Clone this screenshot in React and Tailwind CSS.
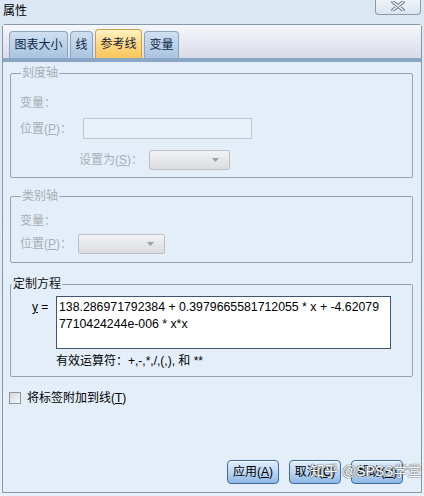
import React from 'react';

const font = { fontFamily: '"Liberation Sans", "Noto Sans CJK SC", sans-serif' };

// disabled grey dropdown
const Combo = ({ width }) => (
    <div
        className={`${width} h-[20px] flex items-center justify-end pr-[10px] border border-[#bcc0c4] rounded-[2px] bg-gradient-to-b from-[#f1f2f3] to-[#dadcde]`}
    >
        <svg width="7" height="4" viewBox="0 0 7 4">
            <path d="M0 0 H7 L3.5 4 Z" fill="#9ca0a5" />
        </svg>
    </div>
);

const Tab = ({ label, width, active }) => (
    <div
        className={
            active
                ? `${width} h-[29px] flex items-center justify-center rounded-t-[4px] border border-b-0 border-[#c8a04e] bg-gradient-to-b from-[#fff2c2] via-[#ffd981] to-[#f7c55d] text-[12px] text-[#1a2436]`
                : `${width} h-[27px] flex items-center justify-center rounded-t-[4px] border border-b-0 border-[#8aa4bf] bg-gradient-to-b from-[#cfe0f1] to-[#a9c4df] text-[12px] text-[#0f2748]`
        }
    >
        {label}
    </div>
);

const Button = ({ children }) => (
    <button className="w-[52px] h-[24px] rounded-[4px] border border-[#3f6b9c] bg-gradient-to-b from-[#e1eefb] via-[#bcd7f3] to-[#8fb8e5] text-[12px] text-black flex items-center justify-center shadow-[inset_0_1px_0_rgba(255,255,255,0.8)]">
        {children}
    </button>
);

export default function App() {
    return (
        <div className="relative w-[424px] h-[496px] overflow-hidden bg-gradient-to-b from-[#dbe7f3] to-[#e7eff7]" style={font}>
            {/* title bar */}
            <div className="h-[24px] flex items-start justify-between">
                <span className="pl-[3px] pt-[3px] text-[12px] leading-[16px] text-black">属性</span>
                <div className="mr-[3px] w-[46px] h-[15px] rounded-b-[4px] border border-t-0 border-[#8c9aa8] bg-gradient-to-b from-[#eef3f8] to-[#dbe4ee] flex items-start justify-center">
                    <svg width="14" height="10" viewBox="0 0 14 10" className="mt-[1px]">
                        <path d="M2 1 L12 9 M12 1 L2 9" stroke="#5c6f83" strokeWidth="3.4" strokeLinecap="round" />
                        <path d="M2 1 L12 9 M12 1 L2 9" stroke="#ffffff" strokeWidth="1.6" strokeLinecap="round" />
                    </svg>
                </div>
            </div>

            {/* dialog frame */}
            <div className="ml-[2px] w-[420px] h-[469px] border border-[#8797a8] rounded-t-[3px] flex flex-col">
                {/* tab header */}
                <div className="h-[33px] flex items-end gap-[2px] pl-[6px] bg-gradient-to-b from-[#f6f7fa] to-[#d9dbe8]">
                    <Tab label="图表大小" width="w-[59px]" />
                    <Tab label="线" width="w-[23px]" />
                    <Tab label="参考线" width="w-[47px]" active />
                    <Tab label="变量" width="w-[35px]" />
                </div>
                <div className="h-[4px] bg-[#8aa8c5]" />

                {/* content */}
                <div className="flex-1 flex flex-col bg-[#e3eef9] px-[7px] text-[12px]">
                    {/* 刻度轴 */}
                    <fieldset className="mt-[4px] w-[403px] h-[112px] border border-[#97a3ad] rounded-[2px] px-[9px]">
                        <legend className="ml-[1px] px-[1px] leading-[14px] text-[#a7aeb5]">刻度轴</legend>
                        <div className="pt-[15px] flex flex-col text-[#a7aeb5]">
                            <div className="h-[16px] leading-[16px]">变量：</div>
                            <div className="mt-[7px] h-[21px] flex items-center">
                                <span className="w-[63px]">位置(<span className="underline">P</span>)：</span>
                                <div className="w-[169px] h-[21px] border border-[#bcc6cf] bg-[#e9f1f8]" />
                            </div>
                            <div className="mt-[11px] h-[20px] flex items-center pl-[59px]">
                                <span className="w-[70px]">设置为(<span className="underline">S</span>)：</span>
                                <Combo width="w-[81px]" />
                            </div>
                        </div>
                    </fieldset>

                    {/* 类别轴 */}
                    <fieldset className="mt-[11px] w-[403px] h-[74px] border border-[#97a3ad] rounded-[2px] px-[9px]">
                        <legend className="ml-[1px] px-[1px] leading-[14px] text-[#a7aeb5]">类别轴</legend>
                        <div className="pt-[10px] flex flex-col text-[#a7aeb5]">
                            <div className="h-[16px] leading-[16px]">变量：</div>
                            <div className="mt-[5px] h-[20px] flex items-center">
                                <span className="w-[58px]">位置(<span className="underline">P</span>)：</span>
                                <Combo width="w-[87px]" />
                            </div>
                        </div>
                    </fieldset>

                    {/* 定制方程 */}
                    <fieldset className="mt-[14px] w-[403px] h-[100px] border border-[#97a3ad] rounded-[2px]">
                        <legend className="ml-[1px] px-[1px] leading-[14px] text-[#111]">定制方程</legend>
                        <div className="pt-[5px] flex flex-col text-black">
                            <div className="flex items-start">
                                <span className="w-[45px] pl-[21px] pt-[3px] leading-[16px]">
                                    <span className="underline">y</span> =
                                </span>
                                <div className="w-[335px] h-[53px] border border-[#3d5771] bg-white px-[2px] pt-[2px] text-[12.3px] leading-[17px] whitespace-nowrap">
                                    <div>138.286971792384 + 0.3979665581712055 * x + -4.62079</div>
                                    <div>7710424244e-006 * x*x</div>
                                </div>
                            </div>
                            <div className="mt-[4px] pl-[45px] leading-[16px]">有效运算符：+,-,*,/,(,), 和 **</div>
                        </div>
                    </fieldset>

                    {/* checkbox */}
                    <label className="mt-[14px] -ml-[1px] flex items-center gap-[6px] h-[14px] text-black">
                        <span className="w-[12px] h-[12px] border border-[#8e959c] bg-gradient-to-br from-[#d4d8dc] to-[#f5f6f7]" />
                        <span>将标签附加到线(<span className="underline">T</span>)</span>
                    </label>

                    {/* buttons */}
                    <div className="mt-auto mb-[8px] pr-[11px] flex justify-end gap-[10px]">
                        <Button>应用(<span className="underline">A</span>)</Button>
                        <Button>取消(<span className="underline">C</span>)</Button>
                        <Button>帮助(<span className="underline">H</span>)</Button>
                    </div>
                </div>
            </div>

            {/* watermark */}
            <div className="absolute left-[310px] top-[462px] text-[14px] leading-[18px] text-white [text-shadow:0_0_1px_#555,0_0_1px_#555,0_0_2px_rgba(0,0,0,0.3)] whitespace-nowrap">
                知乎 @SPSS学堂
            </div>
        </div>
    );
}
